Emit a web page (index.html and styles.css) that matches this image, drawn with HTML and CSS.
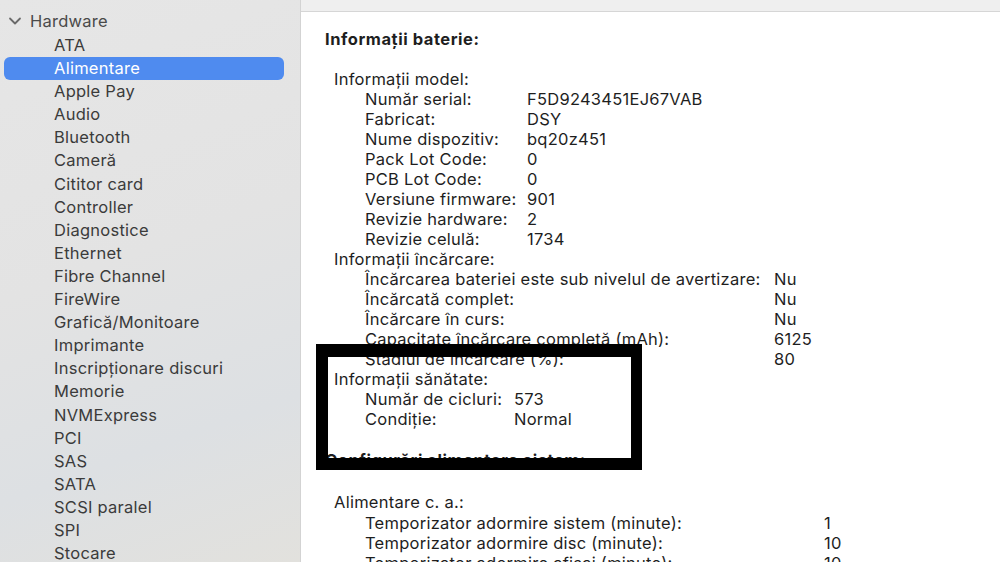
FILE: index.html
```html
<!DOCTYPE html>
<html>
<head>
    <title>Informații sistem</title>
    <meta charset="UTF-8">
    <link rel="stylesheet" href="styles.css">
</head>
<body>
    <div class="window">
        <aside class="sidebar">
            <div class="group-title">
                <svg class="chevron" width="14" height="10" viewBox="0 0 14 10">
                    <path d="M2 2.5 L7 7.5 L12 2.5" fill="none" stroke="#6a6a6a" stroke-width="1.8" stroke-linecap="round" stroke-linejoin="round"/>
                </svg>
                <span>Hardware</span>
            </div>
            <ul class="nav">
                <li>ATA</li>
                <li class="active">Alimentare</li>
                <li>Apple Pay</li>
                <li>Audio</li>
                <li>Bluetooth</li>
                <li>Cameră</li>
                <li>Cititor card</li>
                <li>Controller</li>
                <li>Diagnostice</li>
                <li>Ethernet</li>
                <li>Fibre Channel</li>
                <li>FireWire</li>
                <li>Grafică/Monitoare</li>
                <li>Imprimante</li>
                <li>Inscripționare discuri</li>
                <li>Memorie</li>
                <li>NVMExpress</li>
                <li>PCI</li>
                <li>SAS</li>
                <li>SATA</li>
                <li>SCSI paralel</li>
                <li>SPI</li>
                <li>Stocare</li>
            </ul>
        </aside>

        <main class="main">
            <div class="toolbar"></div>
            <div class="content">
                <h2>Informații baterie:</h2>
                <div class="spacer"></div>

                <div class="section">Informații model:</div>
                <div class="rows model">
                    <span>Număr serial:</span><span>F5D9243451EJ67VAB</span>
                    <span>Fabricat:</span><span>DSY</span>
                    <span>Nume dispozitiv:</span><span>bq20z451</span>
                    <span>Pack Lot Code:</span><span>0</span>
                    <span>PCB Lot Code:</span><span>0</span>
                    <span>Versiune firmware:</span><span>901</span>
                    <span>Revizie hardware:</span><span>2</span>
                    <span>Revizie celulă:</span><span>1734</span>
                </div>

                <div class="section">Informații încărcare:</div>
                <div class="rows charge">
                    <span>Încărcarea bateriei este sub nivelul de avertizare:</span><span>Nu</span>
                    <span>Încărcată complet:</span><span>Nu</span>
                    <span>Încărcare în curs:</span><span>Nu</span>
                    <span>Capacitate încărcare completă (mAh):</span><span>6125</span>
                    <span>Stadiul de încărcare (%):</span><span>80</span>
                </div>

                <div class="section">Informații sănătate:</div>
                <div class="rows health">
                    <span>Număr de cicluri:</span><span>573</span>
                    <span>Condiție:</span><span>Normal</span>
                </div>

                <div class="spacer before"></div>
                <h2>Configurări alimentare sistem:</h2>
                <div class="spacer wide"></div>

                <div class="section">Alimentare c. a.:</div>
                <div class="rows power">
                    <span>Temporizator adormire sistem (minute):</span><span>1</span>
                    <span>Temporizator adormire disc (minute):</span><span>10</span>
                    <span>Temporizator adormire afișaj (minute):</span><span>10</span>
                </div>
            </div>
        </main>
    </div>

    <div class="marker"></div>
</body>
</html>
```

FILE: styles.css
```css
* {
    box-sizing: border-box;
    margin: 0;
    padding: 0;
}

html, body {
    width: 1000px;
    height: 562px;
    overflow: hidden;
}

body {
    font-family: 'Inter', 'Liberation Sans', sans-serif;
    color: #1e1e1e;
    background: #fff;
}

.window {
    display: flex;
    height: 562px;
}

/* sidebar */
.sidebar {
    width: 301px;
    flex-shrink: 0;
    background: linear-gradient(160deg, #e6e6e6 0%, #e3e3e3 45%, #dde0e3 75%, #e2e1dd 100%);
    border-right: 1px solid #d3d3d3;
    padding-top: 9px;
    color: #3b3b3b;
    font-size: 16.5px;
    letter-spacing: 0.25px;
}

.group-title {
    display: flex;
    align-items: center;
    gap: 8px;
    height: 23px;
    padding-left: 8px;
    color: #4a4a4a;
}

.chevron {
    display: block;
}

.nav {
    list-style: none;
    margin-top: 2px;
}

.nav li {
    height: 23.1px;
    line-height: 23.1px;
    margin: 0 16px 0 4px;
    padding-left: 50px;
    border-radius: 6px;
    white-space: nowrap;
}

.nav li.active {
    background: #4f8bef;
    color: #fff;
}

/* main panel */
.main {
    flex: 1;
    display: flex;
    flex-direction: column;
    background: #fff;
}

.toolbar {
    height: 12px;
    background: #efefef;
    border-bottom: 1px solid #d6d6d6;
    flex-shrink: 0;
}

.content {
    padding: 16.5px 0 0 24px;
    font-size: 16.5px;
    letter-spacing: 0.25px;
    line-height: 20.05px;
}

.content h2 {
    font-size: 16.5px;
    font-weight: 700;
    letter-spacing: 0.55px;
    line-height: 20.05px;
}

.spacer {
    height: 20.05px;
}

.spacer.before {
    height: 21px;
}

.spacer.wide {
    height: 22px;
}

.section {
    padding-left: 9px;
}

.rows {
    display: grid;
    padding-left: 40px;
}

.rows span {
    white-space: nowrap;
}

.rows.model  { grid-template-columns: 162px auto; }
.rows.charge { grid-template-columns: 409px auto; }
.rows.health { grid-template-columns: 149px auto; }
.rows.power  { grid-template-columns: 459px auto; }

/* black annotation frame drawn over the screenshot */
.marker {
    position: absolute;
    left: 316px;
    top: 344px;
    width: 326px;
    height: 126px;
    border-style: solid;
    border-color: #000;
    border-width: 13px 11px 12px 12px;
}
```
